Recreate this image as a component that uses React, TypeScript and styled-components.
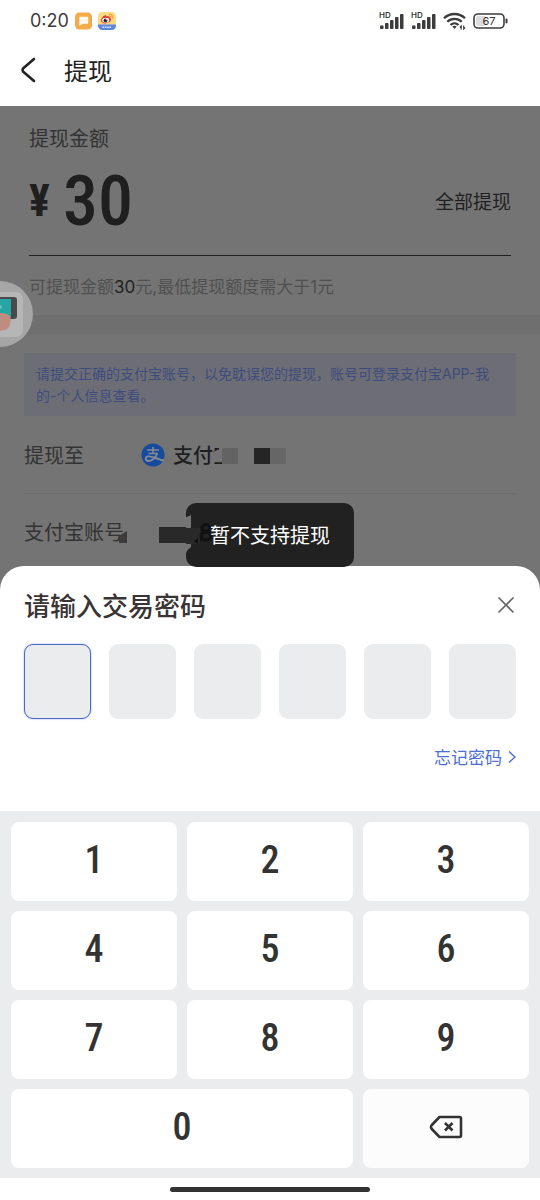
import React from 'react';
import styled, { createGlobalStyle, css } from 'styled-components';

const base = '"Noto Sans CJK SC", sans-serif';
const mixed = 'Inter, "Noto Sans CJK SC", sans-serif';
const digits = '"Roboto Condensed", Roboto, sans-serif';

const GlobalStyle = createGlobalStyle`
  * { box-sizing: border-box; }
  body {
    margin: 0;
    background: #fff;
    font-family: ${base};
    color: #222;
  }
  button, input {
    font: inherit;
    color: inherit;
    border: 0;
    padding: 0;
    margin: 0;
    background: none;
  }
  button { cursor: pointer; }
`;

const Screen = styled.div`
  min-height: 100vh;
  display: flex;
  flex-direction: column;
  position: relative;
  overflow: hidden;
`;

const StatusBar = styled.header`
  height: 42px;
  padding: 0 32px 0 30px;
  display: flex;
  align-items: center;
  justify-content: space-between;
  color: #3c3c3c;
`;

const StatusGroup = styled.div`
  display: flex;
  align-items: center;
  gap: 6px;
`;

const Clock = styled.time`
  font-family: ${mixed};
  font-size: 18px;
  line-height: 24px;
`;

const NavBar = styled.nav`
  height: 64px;
  padding: 0 20px 8px;
  display: flex;
  align-items: center;
  gap: 28px;
`;

const IconButton = styled.button`
  display: flex;
`;

const PageTitle = styled.h1`
  margin: 0;
  font-size: 24px;
  line-height: 36px;
  font-weight: 400;
`;

const Page = styled.main`
  position: relative;
  background: #747474;
  color: #1f1f1f;
  padding-bottom: 20px;
`;

const AmountSection = styled.section`
  padding: 16px 29px 14px;
  border-bottom: 19px solid #6f6f6f;
`;

const AmountLabel = styled.label`
  display: block;
  font-size: 20px;
  line-height: 32px;
  color: #333;
`;

const AmountRow = styled.div`
  height: 102px;
  padding-bottom: 8px;
  display: flex;
  align-items: center;
  border-bottom: 1px solid #1f1f1f;
`;

const Currency = styled.span`
  width: 34px;
  font: 700 44px/60px ${digits};
`;

const AmountInput = styled.input`
  flex: 1;
  min-width: 0;
  height: 80px;
  && { font: 500 70px/80px ${digits}; }
`;

const AllButton = styled.button`
  && { font-size: 19px; }
  line-height: 28px;
`;

const Hint = styled.p`
  margin: 17px 0 0;
  font-family: ${mixed};
  font-size: 17px;
  line-height: 28px;
  color: #505050;
  b { font-weight: 400; color: #1f1f1f; }
`;

const AccountSection = styled.section`
  padding: 19px 24px 0;
`;

const Notice = styled.p`
  margin: 0;
  padding: 10px 16px 9px 12px;
  font-family: ${mixed};
  font-size: 14px;
  line-height: 22px;
  color: #3f4c7e;
  background: #6d6e75;
`;

const AccountList = styled.dl`
  margin: 0;
`;

const AccountRow = styled.div`
  height: 77px;
  display: flex;
  align-items: center;
  font-size: 20px;
  line-height: 30px;
  & + & { border-top: 1px solid #6c6c6c; }
`;

const Term = styled.dt`
  width: 117px;
  position: relative;
  color: #333;
`;

const Detail = styled.dd`
  margin: 0;
  display: flex;
  align-items: center;
  gap: 8px;
  position: relative;
  font-weight: 500;
`;

const Mosaic = styled.svg<{ $left: number; $top: number }>`
  position: absolute;
  left: ${p => p.$left}px;
  top: ${p => p.$top}px;
`;

const FloatingButton = styled.button`
  position: absolute;
  left: -33px;
  top: 175px;
  display: flex;
`;

const Toast = styled.div`
  position: absolute;
  left: 50%;
  top: 503px;
  transform: translateX(-50%);
  z-index: 2;
  padding: 16px 24px;
  border-radius: 10px;
  background: #212121;
  color: #fff;
  font-size: 20px;
  line-height: 32px;
  white-space: nowrap;
`;

const ToastText = styled.span`
  position: relative;
`;

const Sheet = styled.section`
  position: relative;
  margin-top: -24px;
  padding: 20px 24px 38px;
  background: #fff;
  border-radius: 24px 24px 0 0;
`;

const SheetHeader = styled.div`
  display: flex;
  align-items: center;
  justify-content: space-between;
`;

const SheetTitle = styled.h2`
  margin: 0;
  font-size: 26px;
  line-height: 38px;
  font-weight: 500;
  color: #3a3434;
`;

const CodeRow = styled.div`
  margin-top: 20px;
  display: grid;
  grid-template-columns: repeat(6, 1fr);
  gap: 18px;
`;

const CodeCell = styled.input<{ $active?: boolean }>`
  && {
    width: 100%;
    height: 75px;
    border-radius: 9px;
    background: #ebecee;
    text-align: center;
    font-size: 26px;
    outline: none;
    ${p => p.$active && css`
      border: 1px solid #4a68c8;
      box-shadow: 0 0 2px #8fb0f5;
    `}
  }
`;

const ForgotRow = styled.div`
  margin-top: 23px;
  padding-bottom: 1px;
  display: flex;
  justify-content: flex-end;
`;

const ForgotLink = styled.a`
  display: flex;
  align-items: center;
  gap: 6px;
  font-size: 17px;
  line-height: 30px;
  color: #4c6fd0;
  text-decoration: none;
`;

const Keypad = styled.section`
  flex: 1;
  padding: 11px 11px 10px;
  display: grid;
  grid-template-columns: repeat(3, 1fr);
  grid-auto-rows: minmax(79px, 1fr);
  gap: 10px;
  background: #ebecee;
`;

const Key = styled.button<{ $wide?: boolean; $muted?: boolean }>`
  && {
    display: flex;
    align-items: center;
    justify-content: center;
    grid-column: span ${p => (p.$wide ? 2 : 1)};
    padding-bottom: 3px;
    border-radius: 8px;
    background: ${p => (p.$muted ? '#fcfcfc' : '#fff')};
    color: #333;
    font: 500 38px/44px ${digits};
  }
`;

const HomeArea = styled.footer`
  height: 22px;
  display: flex;
  align-items: center;
  justify-content: center;
`;

const HomeBar = styled.div`
  width: 37%;
  height: 5px;
  border-radius: 3px;
  background: #333;
`;

const ChatBadge = () => (
  <svg width="17" height="18" viewBox="0 0 18 18" aria-hidden="true">
    <rect width="18" height="18" rx="4.5" fill="#f6ab4a" />
    <path d="M5.5 4.5H14v6.500q0 1-1 1H8.500l-4 2V5.500a1 1 0 0 1 1-1z" fill="#fffaf0" />
  </svg>
);

const WeiboBadge = () => (
  <svg width="18" height="18" viewBox="0 0 18 18" aria-hidden="true">
    <rect width="18" height="18" rx="4.5" fill="#fbdc83" />
    <path d="M0 12.5h18v1a4.5 4.5 0 0 1-4.5 4.5h-9A4.5 4.5 0 0 1 0 13.5z" fill="#5c86e6" />
    <path d="M4.5 15.2h9" stroke="#dfe8ff" strokeWidth="1.5" strokeDasharray="1.6 .7" />
    <path d="M6.7 3.4c1.4-.6 2 .1 1.7 1.100 2.300-.8 3.700-.2 3.200 1.300 1.400.5 1.900 1.500 1.300 2.800-.9 1.900-3.200 2.900-5.700 2.800-2.600-.1-4.300-1.300-4.200-3.200.1-1.800 1.900-4.100 3.700-4.800z" fill="#d9372c" />
    <ellipse cx="7.7" cy="8.2" rx="3.500" ry="2.400" fill="#fff" />
    <circle cx="7.5" cy="8.3" r="1.9" fill="#1c1c1c" />
    <circle cx="8.2" cy="7.7" r=".6" fill="#fff" />
    <path d="M11.2 2.2c2.400-.3 4.200 1.500 3.700 3.900M11.400 4.100c1.200-.1 1.800.7 1.600 1.700" fill="none" stroke="#f08a24" strokeWidth="1" strokeLinecap="round" />
  </svg>
);

const Signal = () => (
  <svg width="26" height="20" viewBox="0 0 26 20" aria-hidden="true">
    <text x="0" y="7" fontFamily="Inter, sans-serif" fontSize="8" fontWeight="600" fill="#3c3c3c">HD</text>
    <g fill="#3c3c3c">
      <rect x="1" y="14.5" width="3.500" height="3.500" rx=".8" />
      <rect x="6" y="12" width="3.500" height="6" rx=".8" />
      <rect x="11" y="9" width="3.500" height="9" rx=".8" />
      <rect x="16" y="6" width="3.500" height="12" rx=".8" />
      <rect x="21" y="3" width="3.500" height="15" rx=".8" />
    </g>
  </svg>
);

const Wifi = () => (
  <svg width="24" height="18" viewBox="0 0 24 18" aria-hidden="true">
    <g fill="none" stroke="#3c3c3c" strokeWidth="2.300">
      <path d="M1 6.300a15 15 0 0 1 21 0" />
      <path d="M4.300 9.800a10.300 10.300 0 0 1 14.400 0" />
      <path d="M7.500 13a5.800 5.800 0 0 1 8 0" />
    </g>
    <path d="M9.300 14.600q2.200-1.700 4.400 0L11.500 17z" fill="#3c3c3c" />
    <path d="M18.200 17.500V14l-1.400 1.500M20.700 13.500V17l1.400-1.500" fill="none" stroke="#3c3c3c" strokeWidth="1.100" />
  </svg>
);

const Battery = () => (
  <svg width="35" height="16" viewBox="0 0 35 16" role="img" aria-label="67%">
    <rect x="3" y="3" width="10" height="10" rx="2" fill="#dcdcdc" />
    <rect x="1" y="1" width="30" height="14" rx="4" fill="none" stroke="#3c3c3c" strokeWidth="1.600" />
    <rect x="32.500" y="5.500" width="2" height="5" rx="1" fill="#3c3c3c" />
    <text x="16" y="12" textAnchor="middle" fontFamily="Inter, sans-serif" fontSize="11" fill="#333">67</text>
  </svg>
);

const BackIcon = () => (
  <svg width="16" height="26" viewBox="0 0 16 26" aria-hidden="true">
    <path d="M14 2L3 11.500Q2 13 3 14.500L14 24" fill="none" stroke="#222" strokeWidth="2.600" strokeLinecap="round" strokeLinejoin="round" />
  </svg>
);

const AlipayIcon = () => (
  <svg width="24" height="24" viewBox="0 0 24 24" aria-hidden="true">
    <circle cx="12" cy="12" r="11.500" fill="#164a9c" />
    <g fill="none" stroke="#858b94">
      <path d="M6 7h12M12 4v6.500M7.500 10.500h9" strokeWidth="1.600" />
      <path d="M16.300 10.300c-1.500 4.500-5 7.700-8.600 7.700-3.600 0-4-4.300-.4-4.600 4.700-.3 9.500 3.300 15.700 4.100" strokeWidth="1.900" />
    </g>
  </svg>
);

const HandPhoneIcon = () => (
  <svg width="66" height="66" viewBox="0 0 66 66" aria-hidden="true">
    <circle cx="33" cy="33" r="33" fill="#a6a6a6" />
    <rect x="8" y="11" width="48" height="45" rx="7" fill="#b6b6b6" />
    <rect x="10" y="16" width="40" height="22" rx="3" fill="#48494b" />
    <rect x="14" y="18" width="30" height="18" fill="#27a4a4" />
    <circle cx="33" cy="26" r="2" fill="#69bebe" />
    <path d="M22 36c5-5 17-5 21-1 2 5 0 12-5 14-7 2-14 1-16-3z" fill="#bd8d82" />
  </svg>
);

const CloseIcon = () => (
  <svg width="20" height="20" viewBox="0 0 20 20" aria-hidden="true">
    <path d="M3 3l14 14M17 3L3 17" stroke="#666" strokeWidth="1.700" strokeLinecap="round" />
  </svg>
);

const ChevronIcon = () => (
  <svg width="8" height="14" viewBox="0 0 8 14" aria-hidden="true">
    <path d="M1 1.500L7 7l-6 5.500" fill="none" stroke="#4c6fd0" strokeWidth="1.400" />
  </svg>
);

const DeleteIcon = () => (
  <svg width="34" height="24" viewBox="0 0 34 24" aria-hidden="true">
    <g fill="none" stroke="#333" strokeWidth="2.600" strokeLinejoin="round">
      <path d="M10.500 2h20q1.500 0 1.500 1.500v17q0 1.500-1.500 1.500h-20L2.800 14q-1.600-2 0-4z" />
      <path d="M16 8l7.500 7.500M23.500 8L16 15.500" />
    </g>
  </svg>
);

const keys = ['1', '2', '3', '4', '5', '6', '7', '8', '9'];
const cells = [0, 1, 2, 3, 4, 5];

export default function App() {
  return (
    <>
      <GlobalStyle />
      <Screen>
        <StatusBar>
          <StatusGroup>
            <Clock>0:20</Clock>
            <ChatBadge />
            <WeiboBadge />
          </StatusGroup>
          <StatusGroup>
            <Signal />
            <Signal />
            <Wifi />
            <Battery />
          </StatusGroup>
        </StatusBar>
        <NavBar>
          <IconButton type="button" aria-label="返回"><BackIcon /></IconButton>
          <PageTitle>提现</PageTitle>
        </NavBar>

        <Page>
          <AmountSection>
            <AmountLabel htmlFor="amount">提现金额</AmountLabel>
            <AmountRow>
              <Currency>¥</Currency>
              <AmountInput id="amount" inputMode="decimal" defaultValue="30" />
              <AllButton type="button">全部提现</AllButton>
            </AmountRow>
            <Hint>可提现金额<b>30</b>元,最低提现额度需大于1元</Hint>
          </AmountSection>
          <AccountSection>
            <Notice>请提交正确的支付宝账号，以免耽误您的提现，账号可登录支付宝APP-我的-个人信息查看。</Notice>
            <AccountList>
              <AccountRow>
                <Term>提现至</Term>
                <Detail>
                  <AlipayIcon />
                  支付宝
                  <Mosaic $left={72} $top={1} width="74" height="28" viewBox="0 0 74 28" aria-hidden="true">
                    <path d="M6 0h18v28h-4v-8H2V10h4z" fill="#747474" />
                    <rect x="9" y="7" width="16" height="16" fill="#636363" />
                    <rect x="41" y="7" width="16" height="16" fill="#252525" />
                    <rect x="57" y="7" width="16" height="16" fill="#666" />
                  </Mosaic>
                </Detail>
              </AccountRow>
              <AccountRow>
                <Term>
                  支付宝账号
                  <Mosaic $left={95} $top={14} width="8" height="12" viewBox="0 0 8 12" aria-hidden="true">
                    <path d="M0 5l8-5v12H0z" fill="#3b3b3b" />
                  </Mosaic>
                </Term>
                <Detail>
                  <Mosaic $left={18} $top={-5} width="34" height="16" viewBox="0 0 34 16" aria-hidden="true">
                    <rect width="34" height="16" fill="#292929" />
                  </Mosaic>
                </Detail>
              </AccountRow>
            </AccountList>
          </AccountSection>
          <FloatingButton type="button" aria-label="悬浮窗"><HandPhoneIcon /></FloatingButton>
        </Page>

        <Toast role="status">
          <Mosaic $left={0} $top={0} width="90" height="64" viewBox="0 0 90 64" aria-hidden="true">
            <path d="M0 14q1 0 5-2v32q-5 3-5 8z" fill="#747474" />
            <path d="M0 25h14v16H0z" fill="#292929" />
            <path d="M8 38l4-3v6zM14 30l3 2v4l-3 3z" fill="#111" />
            <g fill="none" stroke="#111" strokeWidth="3">
              <ellipse cx="20" cy="25" rx="4" ry="3.500" />
              <ellipse cx="20" cy="33" rx="5" ry="4" />
              <path d="M34 25h8M54 25h10M72 25h8" />
            </g>
          </Mosaic>
          <ToastText>暂不支持提现</ToastText>
        </Toast>

        <Sheet role="dialog" aria-labelledby="sheet-title">
          <SheetHeader>
            <SheetTitle id="sheet-title">请输入交易密码</SheetTitle>
            <IconButton type="button" aria-label="关闭"><CloseIcon /></IconButton>
          </SheetHeader>
          <CodeRow>
            {cells.map(i => (
              <CodeCell key={i} type="password" maxLength={1} inputMode="none" aria-label={`密码第${i + 1}位`} $active={i === 0} />
            ))}
          </CodeRow>
          <ForgotRow>
            <ForgotLink href="#forgot">忘记密码<ChevronIcon /></ForgotLink>
          </ForgotRow>
        </Sheet>

        <Keypad aria-label="数字键盘">
          {keys.map(k => <Key key={k} type="button">{k}</Key>)}
          <Key type="button" $wide>0</Key>
          <Key type="button" $muted aria-label="删除"><DeleteIcon /></Key>
        </Keypad>
        <HomeArea><HomeBar /></HomeArea>
      </Screen>
    </>
  );
}
